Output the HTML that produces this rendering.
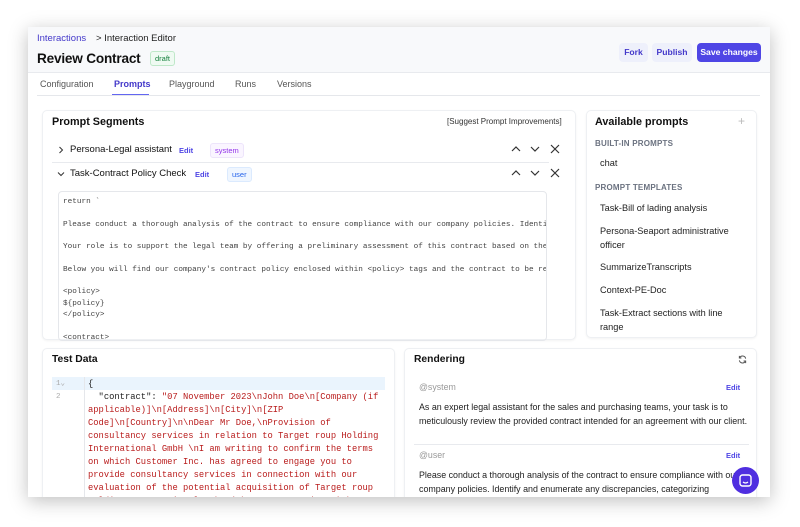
<!DOCTYPE html>
<html><head><style>
*{box-sizing:border-box;margin:0;padding:0}
body{width:800px;height:527px;background:#fff;font-family:"Liberation Sans",sans-serif;position:relative;overflow:hidden;color:#111}
.win{position:absolute;left:28px;top:27px;width:742px;height:470px;background:#fff;box-shadow:0 4px 18px rgba(0,0,0,.25);overflow:hidden}
.hdr{position:absolute;left:0;top:0;width:742px;height:46px;background:#f8f9fb;border-bottom:1px solid #e8eaee}
.a{position:absolute;white-space:nowrap}
.card{position:absolute;background:#fff;border:1px solid #eef0f3;border-radius:5px;box-shadow:0 1px 2px rgba(0,0,0,.05)}
.btn{position:absolute;top:16px;height:19px;border-radius:4px;font-size:8.6px;font-weight:bold;line-height:19px;text-align:center}
.tab{position:absolute;top:52px;font-size:9px;color:#555}
.mono{font-family:"Liberation Mono",monospace}
.edit{color:#4f46e5;font-size:7.5px;font-weight:bold}
.tag{position:absolute;font-size:7.5px;border-radius:3px;padding:2px 4px}
.pi{position:absolute;left:13px;font-size:9.2px;color:#222;line-height:13.5px}
.sec{position:absolute;left:8px;font-size:8px;color:#6b7280;font-weight:bold;letter-spacing:.2px}
</style></head><body>
<div class="win">
<div class="hdr"></div>
<div class="a" style="left:9px;top:6px;font-size:9.5px;color:#4338ca">Interactions</div>
<div class="a" style="left:68px;top:6px;font-size:9.5px;color:#222">&gt; Interaction Editor</div>
<div class="a" style="left:9px;top:24px;font-size:13.6px;font-weight:bold;letter-spacing:-0.2px">Review Contract</div>
<div class="tag" style="left:122px;top:24px;background:#effaf2;border:1px solid #bfe8c9;color:#15803d">draft</div>
<div class="btn" style="left:591px;width:29px;background:#eef0fb;color:#4338ca">Fork</div>
<div class="btn" style="left:624px;width:40px;background:#eef0fb;color:#4338ca">Publish</div>
<div class="btn" style="left:669px;width:64px;background:#4f46e5;color:#fff">Save changes</div>
<div class="tab" style="left:12px">Configuration</div>
<div class="tab" style="left:86px;color:#4338ca;font-weight:bold">Prompts</div>
<div class="a" style="left:84px;top:67px;width:37px;height:2px;background:#6366f1"></div>
<div class="tab" style="left:141px">Playground</div>
<div class="tab" style="left:207px">Runs</div>
<div class="tab" style="left:249px">Versions</div>
<div class="a" style="left:9px;top:68px;width:723px;height:1px;background:#e5e7eb"></div>

<div class="card" style="left:14px;top:83px;width:534px;height:230px">
<div class="a" style="left:9px;top:5px;font-size:10.8px;font-weight:bold">Prompt Segments</div>
<div class="a" style="left:404px;top:6px;font-size:8px;color:#333">[Suggest Prompt Improvements]</div>
<svg class="a" style="left:15px;top:35px" width="6" height="8" viewBox="0 0 6 8"><path d="M1.5 1L4.5 4L1.5 7" fill="none" stroke="#333" stroke-width="1"/></svg>
<div class="a" style="left:27px;top:33px;font-size:9.5px">Persona-Legal assistant</div>
<div class="a edit" style="left:136px;top:35px">Edit</div>
<div class="tag" style="left:167px;top:32px;background:#faf5ff;border:1px solid #ede4fb;color:#9333ea">system</div>
<svg class="a" style="left:467px;top:33px" width="56" height="10" viewBox="0 0 56 10"><path d="M2 7L6 3L10 7M21 3L25 7L29 3M41 1L49 9M49 1L41 9" fill="none" stroke="#333" stroke-width="1.2"/></svg>
<div class="a" style="left:9px;top:51px;width:497px;height:1px;background:#e8eaee"></div>
<svg class="a" style="left:14px;top:60px" width="8" height="6" viewBox="0 0 8 6"><path d="M1 1.5L4 4.5L7 1.5" fill="none" stroke="#333" stroke-width="1"/></svg>
<div class="a" style="left:27px;top:57px;font-size:9.5px">Task-Contract Policy Check</div>
<div class="a edit" style="left:152px;top:59px">Edit</div>
<div class="tag" style="left:184px;top:56px;background:#eff6ff;border:1px solid #dbeafe;color:#2563eb">user</div>
<svg class="a" style="left:467px;top:57px" width="56" height="10" viewBox="0 0 56 10"><path d="M2 7L6 3L10 7M21 3L25 7L29 3M41 1L49 9M49 1L41 9" fill="none" stroke="#333" stroke-width="1.2"/></svg>
<div class="a mono" style="left:15px;top:80px;width:489px;height:150px;border:1px solid #e5e7eb;border-radius:4px;padding:5px 4px;font-size:7.7px;line-height:11.3px;color:#444;overflow:hidden;white-space:pre">return `

Please conduct a thorough analysis of the contract to ensure compliance with our company policies. Identify

Your role is to support the legal team by offering a preliminary assessment of this contract based on the

Below you will find our company's contract policy enclosed within &lt;policy&gt; tags and the contract to be reviewed

&lt;policy&gt;
${policy}
&lt;/policy&gt;

&lt;contract&gt;</div>
</div>

<div class="card" style="left:558px;top:83px;width:171px;height:228px">
<div class="a" style="left:8px;top:5px;font-size:10.8px;font-weight:bold">Available prompts</div>
<div class="a" style="left:151px;top:3px;font-size:12px;color:#bbb">+</div>
<div class="sec" style="top:28px">BUILT-IN PROMPTS</div>
<div class="pi" style="top:46px">chat</div>
<div class="sec" style="top:72px">PROMPT TEMPLATES</div>
<div class="pi" style="top:91px">Task-Bill of lading analysis</div>
<div class="pi" style="top:114px">Persona-Seaport administrative<br>officer</div>
<div class="pi" style="top:150px">SummarizeTranscripts</div>
<div class="pi" style="top:173px">Context-PE-Doc</div>
<div class="pi" style="top:196px">Task-Extract sections with line<br>range</div>
</div>

<div class="card" style="left:14px;top:321px;width:353px;height:160px">
<div class="a" style="left:9px;top:5px;font-size:10.3px;font-weight:bold">Test Data</div>
<div class="a" style="left:9px;top:28px;width:333px;height:13px;background:#eaf4fd"></div>
<div class="a" style="left:41px;top:28px;width:1px;height:140px;background:#e5e7eb"></div>
<div class="a mono" style="left:13px;top:29px;font-size:7.5px;color:#aaa;line-height:13px">1⌄<br>2</div>
<div class="a mono" style="left:45px;top:29px;font-size:8.8px;line-height:13px;color:#b91c1c;white-space:pre"><span style="color:#222">{</span>
<span style="color:#222">  "contract": </span>"07 November 2023\nJohn Doe\n[Company (if
applicable)]\n[Address]\n[City]\n[ZIP
Code]\n[Country]\n\nDear Mr Doe,\nProvision of
consultancy services in relation to Target roup Holding
International GmbH \nI am writing to confirm the terms
on which Customer Inc. has agreed to engage you to
provide consultancy services in connection with our
evaluation of the potential acquisition of Target roup
Holding International GmbH (the Target Business) by</div>
</div>

<div class="card" style="left:376px;top:321px;width:353px;height:160px">
<div class="a" style="left:9px;top:5px;font-size:10.3px;font-weight:bold">Rendering</div>
<svg class="a" style="left:333px;top:6px" width="9" height="9" viewBox="0 0 10 10"><path d="M8.5 4A3.6 3.6 0 0 0 1.8 3M1.5 6A3.6 3.6 0 0 0 8.2 7M1.5 1V3.3H3.8M8.5 9V6.7H6.2" fill="none" stroke="#555" stroke-width="1.1"/></svg>
<div class="a" style="left:14px;top:33px;font-size:8.8px;color:#999">@system</div>
<div class="a edit" style="left:321px;top:34px">Edit</div>
<div class="a" style="left:14px;top:51px;width:335px;font-size:8.9px;line-height:14px;color:#222;white-space:normal">As an expert legal assistant for the sales and purchasing teams, your task is to meticulously review the provided contract intended for an agreement with our client.</div>
<div class="a" style="left:9px;top:95px;width:335px;height:1px;background:#e8eaee"></div>
<div class="a" style="left:14px;top:101px;font-size:8.8px;color:#999">@user</div>
<div class="a edit" style="left:321px;top:102px">Edit</div>
<div class="a" style="left:14px;top:119px;width:345px;font-size:8.9px;line-height:14px;color:#222;white-space:normal">Please conduct a thorough analysis of the contract to ensure compliance with our company policies. Identify and enumerate any discrepancies, categorizing</div>
</div>
</div>
<div class="a" style="left:732px;top:467px;width:27px;height:27px;border-radius:50%;background:#4f2ee0"></div>
<svg class="a" style="left:739px;top:474px" width="13" height="13" viewBox="0 0 13 13"><rect x="1" y="1" width="11" height="11" rx="2.5" fill="none" stroke="#fff" stroke-width="1.4"/><path d="M4 8Q6.5 10 9 8" fill="none" stroke="#fff" stroke-width="1.2"/></svg>
</body></html>
